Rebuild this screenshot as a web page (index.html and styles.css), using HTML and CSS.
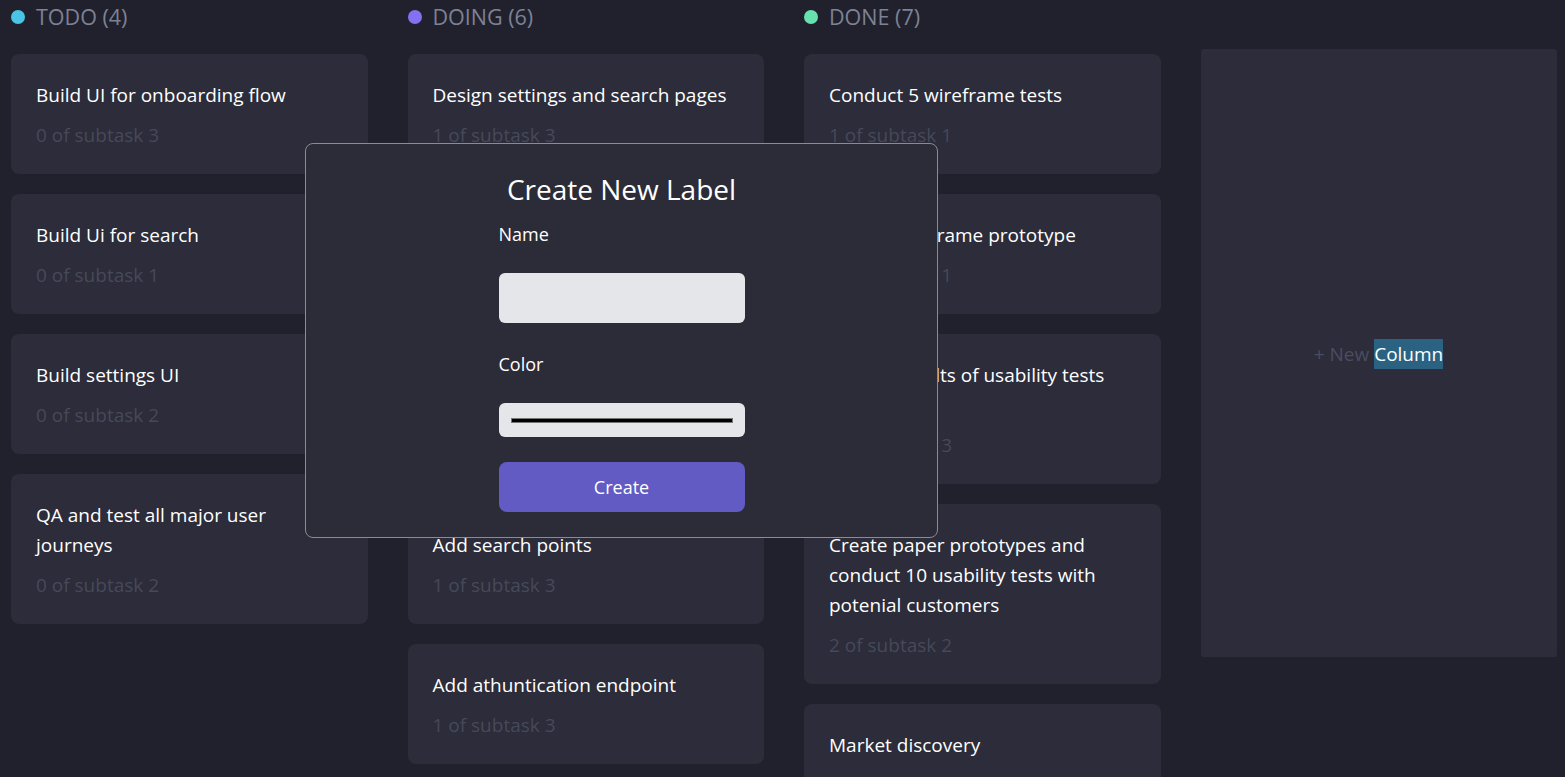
FILE: index.html
```html
<!DOCTYPE html>
<html lang="en">
<head>
<meta charset="utf-8">
<title>Kanban</title>
<link rel="stylesheet" href="styles.css">
</head>
<body>
<div class="board">
  <section class="column">
    <h2 class="col-head"><span class="dot dot-todo"></span>TODO (4)</h2>
    <div class="cards">
      <div class="card"><p class="card-title">Build UI for onboarding flow</p><p class="card-sub">0 of subtask 3</p></div>
      <div class="card"><p class="card-title">Build Ui for search</p><p class="card-sub">0 of subtask 1</p></div>
      <div class="card"><p class="card-title">Build settings UI</p><p class="card-sub">0 of subtask 2</p></div>
      <div class="card"><p class="card-title">QA and test all major user journeys</p><p class="card-sub">0 of subtask 2</p></div>
    </div>
  </section>
  <section class="column">
    <h2 class="col-head"><span class="dot dot-doing"></span>DOING (6)</h2>
    <div class="cards">
      <div class="card"><p class="card-title">Design settings and search pages</p><p class="card-sub">1 of subtask 3</p></div>
      <div class="card"><p class="card-title">Add account management</p><p class="card-sub">1 of subtask 2</p></div>
      <div class="card"><p class="card-title">Design onboarding flow for new users</p><p class="card-sub">1 of subtask 3</p></div>
      <div class="card"><p class="card-title">Add search points</p><p class="card-sub">1 of subtask 3</p></div>
      <div class="card"><p class="card-title">Add athuntication endpoint</p><p class="card-sub">1 of subtask 3</p></div>
      <div class="card"><p class="card-title">Research pricing points of various competitors</p><p class="card-sub">1 of subtask 3</p></div>
    </div>
  </section>
  <section class="column">
    <h2 class="col-head"><span class="dot dot-done"></span>DONE (7)</h2>
    <div class="cards">
      <div class="card"><p class="card-title">Conduct 5 wireframe tests</p><p class="card-sub">1 of subtask 1</p></div>
      <div class="card"><p class="card-title">Create wireframe prototype</p><p class="card-sub">1 of subtask 1</p></div>
      <div class="card"><p class="card-title">Review results of usability tests and iterate</p><p class="card-sub">3 of subtask 3</p></div>
      <div class="card"><p class="card-title">Create paper prototypes and conduct 10 usability tests with potenial customers</p><p class="card-sub">2 of subtask 2</p></div>
      <div class="card"><p class="card-title">Market discovery</p><p class="card-sub">1 of subtask 1</p></div>
      <div class="card"><p class="card-title">Competitor analysis</p><p class="card-sub">2 of subtask 2</p></div>
      <div class="card"><p class="card-title">Research the market</p><p class="card-sub">2 of subtask 2</p></div>
    </div>
  </section>
  <section class="new-column">
    <span class="new-label">+ New <span class="selected">Column</span></span>
  </section>
</div>

<div class="modal">
  <div class="modal-form">
    <h1 class="modal-title">Create New Label</h1>
    <label class="field-label">Name</label>
    <div class="text-input"></div>
    <label class="field-label">Color</label>
    <div class="color-input"><span class="swatch"></span></div>
    <button class="create-btn">Create</button>
  </div>
</div>
</body>
</html>
```

FILE: styles.css
```css
* { box-sizing: border-box; }

html, body {
  margin: 0;
  padding: 0;
  height: 100%;
  overflow: hidden;
}

body {
  background: #21212d;
  font-family: "Open Sans", "Noto Sans", sans-serif;
  color: #ffffff;
  position: relative;
}

.board {
  display: flex;
  gap: 40px;
  padding-left: 11px;
  align-items: flex-start;
}

.column {
  width: 356.5px;
  flex: none;
}

.col-head {
  margin: 0;
  height: 54px;
  display: flex;
  align-items: flex-start;
  padding-top: 3px;
  font-size: 21.5px;
  font-weight: 400;
  line-height: 28px;
  color: #7d8295;
}

.dot {
  width: 14px;
  height: 14px;
  border-radius: 50%;
  margin: 7px 11px 0 0;
  flex: none;
}
.dot-todo { background: #49c4e5; }
.dot-doing { background: #8471f2; }
.dot-done { background: #67e2ae; }

.cards {
  display: flex;
  flex-direction: column;
  gap: 20px;
}

.card {
  background: #2c2c3a;
  border-radius: 8px;
  padding: 26px 31px 24px 25px;
}

.card-title {
  margin: 0 0 10px;
  font-size: 19px;
  line-height: 30px;
  color: #ffffff;
}

.card-sub {
  margin: 0;
  font-size: 19px;
  line-height: 30px;
  color: #464959;
}

.new-column {
  width: 356px;
  flex: none;
  margin-top: 49px;
  height: 608px;
  background: #2c2c3a;
  border-radius: 3px;
  display: flex;
  align-items: center;
  justify-content: center;
  padding-top: 2px;
}

.new-label {
  font-size: 19px;
  line-height: 30px;
  color: #4a4d60;
}

.selected {
  display: inline-block;
  background: #2b6282;
  color: #ffffff;
  line-height: 30px;
}

.modal {
  position: absolute;
  left: 305px;
  top: 143px;
  width: 633px;
  height: 395px;
  background: #2c2c38;
  border: 1px solid #8b8b96;
  border-radius: 8px;
  display: flex;
  justify-content: center;
}

.modal-form {
  width: 246px;
  display: flex;
  flex-direction: column;
  padding-top: 25px;
}

.modal-title {
  margin: 0 -60px 10px;
  text-align: center;
  font-size: 28px;
  font-weight: 400;
  line-height: 40px;
}

.field-label {
  font-size: 18px;
  line-height: 30px;
  margin-bottom: 24px;
}

.text-input {
  height: 50px;
  background: #e5e6ea;
  border-radius: 6px;
  margin-bottom: 26px;
}

.color-input {
  height: 34px;
  background: #e5e6ea;
  border-radius: 6px;
  margin-bottom: 25px;
  display: flex;
  align-items: center;
  padding: 0 12px;
}

.swatch {
  flex: 1;
  height: 5px;
  background: #000000;
  border: 1px solid #767676;
}

.create-btn {
  height: 50px;
  border: none;
  border-radius: 8px;
  background: #625bc4;
  color: #ffffff;
  font-family: inherit;
  font-size: 18px;
  padding: 0 0 1px;
}
```
